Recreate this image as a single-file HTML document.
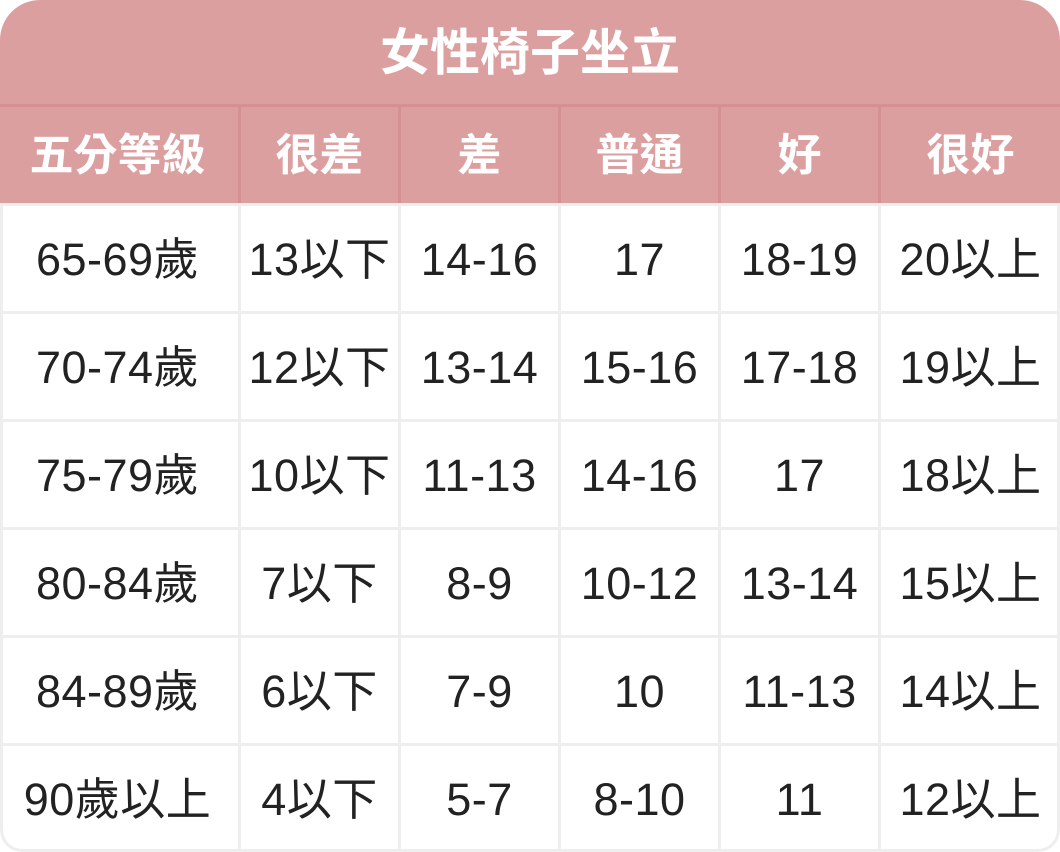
<!DOCTYPE html><html><head><meta charset="utf-8"><style>
body{margin:0;width:1060px;height:852px;background:#fff;overflow:hidden;font-family:"Liberation Sans","Noto Sans CJK TC",sans-serif}
.w{position:absolute;left:0;top:0;width:1060px;height:852px;border-radius:40px 40px 22px 22px;overflow:hidden;background:#fff}
.t{position:absolute;left:0;top:0;width:1060px;height:104px;background:#dc9fa0;color:#fff;font-weight:bold;font-size:50px;text-align:center;line-height:106px}
.h{position:absolute;top:104px;height:99px;background:#dc9fa0;border-top:3px solid #d39192;color:#fff;font-weight:bold;font-size:44px;text-align:center;line-height:98px}
.c{position:absolute;height:105px;color:#222;font-size:45px;letter-spacing:0.5px;text-align:center;line-height:108px;white-space:nowrap}
.vl{position:absolute;top:203px;width:3px;height:660px;background:#eee}
.hl{position:absolute;left:0;width:1060px;height:3px;background:#eee}
.hv{position:absolute;top:104px;width:3px;height:99px;background:#d39192}
.b{position:absolute;left:0;top:203px;width:1054px;height:646px;border:3px solid #eee;border-top:0;border-radius:0 0 22px 22px}
</style></head><body><div class="w">
<div class="t">女性椅子坐立</div>
<div id="g"></div>
<div class="b"></div>
</div>
<script>
var xs=[0,241,401,561,721,881,1063];
var hd=["五分等級","很差","差","普通","好","很好"];
var rows=[["65-69歲","13以下","14-16","17","18-19","20以上"],["70-74歲","12以下","13-14","15-16","17-18","19以上"],["75-79歲","10以下","11-13","14-16","17","18以上"],["80-84歲","7以下","8-9","10-12","13-14","15以上"],["84-89歲","6以下","7-9","10","11-13","14以上"],["90歲以上","4以下","5-7","8-10","11","12以上"]];
var h="";
for(var i=0;i<6;i++){var l=xs[i]+(i?3:0)-3,r=xs[i+1]-3;h+='<div class="h" style="left:'+l+'px;width:'+(r-l)+'px">'+hd[i]+'</div>';}
for(var j=0;j<6;j++){var y=203+j*108+3;for(var i=0;i<6;i++){var l=xs[i]+(i?3:0)-3,r=xs[i+1]-3;h+='<div class="c" style="top:'+y+'px;left:'+l+'px;width:'+(r-l)+'px">'+rows[j][i]+'</div>';}}
for(var i=1;i<6;i++){h+='<div class="vl" style="left:'+(xs[i]-3)+'px"></div><div class="hv" style="left:'+(xs[i]-3)+'px"></div>';}
for(var j=0;j<6;j++){h+='<div class="hl" style="top:'+(203+j*108)+'px"></div>';}
document.getElementById("g").innerHTML=h;
</script></body></html>
